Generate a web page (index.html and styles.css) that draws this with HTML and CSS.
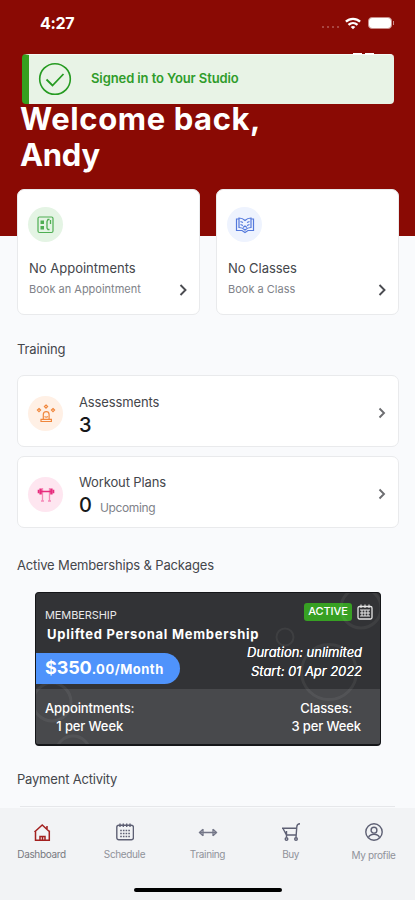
FILE: index.html
```html
<!DOCTYPE html>
<html lang="en">
<head>
<meta charset="utf-8">
<meta name="viewport" content="width=device-width, initial-scale=1">
<title>Dashboard</title>
<link rel="stylesheet" href="styles.css">
</head>
<body>
<div class="app">
  <header class="hero">
    <div class="status">
      <span class="time">4:27</span>
      <div class="status-icons">
        <span class="dots"><i></i><i></i><i></i><i></i></span>
        <svg width="16" height="13" viewBox="0 0 16 13" fill="none" stroke="#fff" stroke-width="2.3"><path d="M.9 4.7C5 .8 11 .8 15.100 4.700M3.500 7.900c2.600-2.400 6.400-2.400 9 0"/><path d="M5.700 10c1.400-1.200 3.200-1.200 4.600 0L8 12.300z" fill="#fff" stroke="none"/></svg>
        <span class="battery"></span><i class="nub"></i>
      </div>
    </div>
    <div class="toast" role="status">
      <svg width="34" height="34" viewBox="0 0 34 34" fill="none" stroke="#269b22" stroke-width="1.600"><circle cx="17" cy="17" r="15.300"/><path d="M8.500 17.500l6 6L25.500 12" stroke-width="1.800"/></svg>
      <span>Signed in to Your Studio</span>
      <b class="peek"></b>
    </div>
    <h1><span class="t-hi">Welcome back,</span><br><span class="t-name">Andy</span></h1>
  </header>

  <main>
    <section class="tiles">
      <a class="tile">
        <span class="disc green"><svg width="18" height="18" viewBox="0 0 18 18" fill="none" stroke="#4eae52"><rect x="1" y="1" width="15" height="15.500" rx="1.500" stroke-width="1.200"/><path d="M3.500 4.500H7V8H3.500zM3.500 10H7v3.500H3.500z" fill="#4eae52" stroke="none"/><path d="M12.500 3.500h-1.500L10 5.500V12l1 1.500h1.500M13.500 4v4" stroke-width="1.300"/></svg></span>
        <span class="tile-title t-app">No Appointments</span>
        <span class="tile-row"><span class="t-bookapp">Book an Appointment</span><svg class="chev" width="8" height="12" viewBox="0 0 8 12"><path d="M1.500 1l5 5-5 5"/></svg></span>
      </a>
      <a class="tile">
        <span class="disc blue"><svg width="20" height="18" viewBox="0 0 20 18" fill="none" stroke="#5479dc" stroke-width="1.200"><path d="M4 3H1.500v11.500H7l3 2 3-2h5.500V3H16M10 4.500C8 2.500 6 2 4 2v9.500c2 0 4 .5 6 2.500 2-2 4-2.500 6-2.500V2c-2 0-4 .5-6 2.500zM5.500 5.500l2.500 1M5.500 8.500l2.500 1M14.500 5.500l-2.500 1M14.500 8.500l-2.500 1M8 11.500l2-1.500 2 1.500"/></svg></span>
        <span class="tile-title t-cls">No Classes</span>
        <span class="tile-row"><span class="t-bookcls">Book a Class</span><svg class="chev" width="8" height="12" viewBox="0 0 8 12"><path d="M1.500 1l5 5-5 5"/></svg></span>
      </a>
    </section>

    <h2 class="h-training">Training</h2>
    <section class="rows">
      <a class="row">
        <span class="disc orange"><svg width="20" height="19" viewBox="0 0 20 19" fill="none" stroke="#f0873c" stroke-width="1.200"><path d="M7.300 15V10.500a2.900 2.900 0 0 1 5.800 0V15M8.500 12.500c1 .8 2.400.8 3.400 0M5 15.300h10.400v2.200H5zM10 1l1.600 1.600L10 4.200 8.400 2.600zM3 4.500l1.600 1.600L3 7.700 1.400 6.100zM17 4.500l1.600 1.600L17 7.700l-1.600-1.600z"/></svg></span>
        <span class="info"><span class="label t-assess">Assessments</span><span class="num">3</span></span>
        <svg class="chev soft" width="8" height="12" viewBox="0 0 8 12"><path d="M1.500 1.500L6 6l-4.500 4.500"/></svg>
      </a>
      <a class="row">
        <span class="disc pink"><svg width="18" height="18" viewBox="0 0 18 18" fill="none" stroke="#e72d7e" stroke-width="1.500"><path d="M5.500 3v13.500M12.500 3v13.500M4 16h3M11 16h3" stroke="#f58ab8" stroke-width="1.300"/><path d="M3 6.500h12"/><path d="M1.600 4.800v3.400M16.400 4.800v3.400" stroke-width="1.800"/><path d="M3.600 3.500v6M14.400 3.500v6" stroke-width="2.400"/></svg></span>
        <span class="info"><span class="label t-work">Workout Plans</span><span class="num">0<small>Upcoming</small></span></span>
        <svg class="chev soft" width="8" height="12" viewBox="0 0 8 12"><path d="M1.500 1.500L6 6l-4.500 4.500"/></svg>
      </a>
    </section>

    <h2 class="h-active">Active Memberships &amp; Packages</h2>
    <article class="pass">
      <svg class="rings" width="346" height="153" viewBox="0 0 346 153" fill="none" stroke="#fff" stroke-opacity=".06" stroke-width="3"><circle cx="294" cy="79" r="27.500"/><circle cx="250" cy="44" r="8.500" stroke-width="2"/><circle cx="326" cy="15" r="20"/><circle cx="17" cy="109" r="19"/><circle cx="38" cy="160" r="17"/></svg>
      <div class="pass-top">
        <div class="pass-head"><span class="kind">MEMBERSHIP</span><span class="badge">ACTIVE</span>
          <svg width="16" height="16" viewBox="0 0 16 16" fill="none" stroke="#e6e6e6" stroke-width="1.300"><rect x="1" y="2.500" width="14" height="12.500" rx="1.500"/><path d="M4 .5v3.500M8 .5v3.500M12 .5v3.500M3 6h10M3 9h10M3 12h10M5 6v6.500M8 6v6.500M11 6v6.500" stroke-width="1.100"/></svg>
        </div>
        <div class="pass-name">Uplifted Personal Membership</div>
        <div class="pass-mid">
          <div class="price"><span class="amt">$350</span><span class="per">.00/Month</span></div>
          <div class="dates"><span class="t-dur">Duration: unlimited</span><span class="t-start">Start: 01 Apr 2022</span></div>
        </div>
      </div>
      <div class="pass-bottom">
        <div><span class="t-a">Appointments:</span><span class="t-1">1 per Week</span></div>
        <div><span class="t-c">Classes:</span><span class="t-3">3 per Week</span></div>
      </div>
    </article>

    <h2 class="h-pay">Payment Activity</h2>
  </main>

  <nav class="tabs">
    <a class="tab on"><svg width="18" height="20" viewBox="0 0 18 20" fill="none" stroke="#a3201f" stroke-width="1.500"><path d="M2.500 8.500v9.700h13.800V8.500M1.500 10L9.200 3l7.600 7M14 4v3.500M7 18v-3.500h5V18M9.500 15v3"/></svg><span class="t-n1">Dashboard</span></a>
    <a class="tab"><svg width="18" height="20" viewBox="0 0 18 20" fill="none" stroke="#5e6074" stroke-width="1.400"><rect x=".8" y="3.300" width="16.600" height="14.500" rx="2"/><path d="M4 1.500V5M7.300 1.500V5M10.700 1.500V5M14 1.500V5"/><path d="M4.200 8.500h10M4.200 11.500h10M4.200 14.500h10" stroke-width="1.600" stroke-dasharray="1.600 1.100"/></svg><span class="t-n2">Schedule</span></a>
    <a class="tab"><svg width="20" height="20" viewBox="0 0 20 20" fill="none" stroke="#5e6074" stroke-width="1.300"><path d="M1 10.500h18M5 7.300l-3.500 3.200L5 13.700M5 7v7M15 7.300l3.500 3.200-3.500 3.200M15 7v7" stroke-opacity=".85"/></svg><span class="t-n3">Training</span></a>
    <a class="tab"><svg width="20" height="20" viewBox="0 0 20 20" fill="none" stroke="#5e6074" stroke-width="1.400"><path d="M19 1.800c-2 0-3 1-3.200 3L15 15.500M1 6.200h14.500M2 6.500L5.500 13h9.500M5.500 9v6"/><circle cx="5.500" cy="17" r="1.300"/><circle cx="15" cy="17" r="1.300"/></svg><span class="t-n4">Buy</span></a>
    <a class="tab last"><svg width="20" height="20" viewBox="0 0 20 20" fill="none" stroke="#5e6074" stroke-width="1.400"><circle cx="10" cy="10" r="8.200"/><circle cx="10" cy="8.200" r="2.900"/><path d="M4.500 15.500c1-2.500 3-3.300 5.500-3.300s4.500.8 5.500 3.300"/></svg><span class="t-n5">My profile</span></a>
    <i class="home-bar"></i>
  </nav>
</div>
</body>
</html>
```
FILE: styles.css
```css
* { box-sizing: border-box; }
body { margin: 0; font-family: Inter, "Liberation Sans", sans-serif; color: #44464b; background: #f9fafc; }
.app { width: 415px; height: 900px; overflow: hidden; display: flex; flex-direction: column; }
h1, h2 { margin: 0; }
svg { flex: none; display: block; }

.hero { height: 236px; flex: none; background: #8a0a04; color: #fff; }
.status { height: 54px; padding: 12px 21px 0 40px; display: flex; justify-content: space-between; align-items: flex-start; }
.time { font-size: 16px; line-height: 22px; font-weight: 700; letter-spacing: -.3px; }
.status-icons { display: flex; align-items: center; height: 22px; }
.dots { display: flex; gap: 3px; margin: 8px 6px 0 0; }
.dots i { width: 2px; height: 2px; border-radius: 1px; background: #b25a56; }
.battery { width: 24px; height: 12px; margin-left: 7px; border-radius: 4px; background: #fff; border: 1px solid #c98d8a; }
.nub { width: 1px; height: 4px; margin-left: 1px; background: #c98d8a; }
.toast { position: relative; height: 50px; margin: 0 21px 0 22px; border-radius: 4px; border-left: 7px solid #36a11f; background: #e8f3e6; border-top: 1px solid #f6faf5; display: flex; align-items: center; padding-left: 9px; }
.toast svg { margin-top: -1px; }
.toast span { margin-left: 19px; font-size: 13px; font-weight: 600; color: #2f9c2a; letter-spacing: -.1px; margin-top: -3px; }
.peek { position: absolute; right: 20px; top: -2px; width: 21px; height: 2px; background: linear-gradient(90deg, #fff 9px, transparent 9px 12px, #fff 12px); }
h1 { margin: -3px 0 0 20px; font-size: 31px; line-height: 36px; font-weight: 700; }
.t-hi { letter-spacing: .6px; }
.t-name { letter-spacing: -.3px; }

main { padding: 0 16px 0 17px; }
.tiles { display: grid; grid-template-columns: 1fr 1fr; gap: 16px; margin-top: -47px; }
.tile { height: 126px; background: #fff; border: 1px solid #e9eaec; border-radius: 7px; padding: 17px 12px 0 11px; display: flex; flex-direction: column; }
.disc { width: 35px; height: 35px; border-radius: 50%; display: grid; place-items: center; flex: none; }
.green { background: #e4f4e4; }
.blue { background: #eef3fe; }
.orange { background: #fff0e5; }
.pink { background: #fee6f0; }
.tile .disc { margin-left: -1px; }
.tile-title { margin-top: 17px; font-size: 13px; line-height: 18px; }
.t-app { letter-spacing: 0; }
.t-cls { letter-spacing: -.05px; }
.tile-row { display: flex; justify-content: space-between; align-items: center; height: 18px; margin-top: 3px; font-size: 11px; color: #808289; }
.t-bookapp { letter-spacing: 0; }
.chev { fill: none; stroke: #4b4c51; stroke-width: 1.900; margin-top: 2px; }
.soft { stroke: #6c6d70; margin: 0; }

h2 { font-size: 13px; line-height: 18px; font-weight: 400; }
.h-training { margin-top: 25px; letter-spacing: -.15px; }
.rows { display: grid; gap: 9px; margin-top: 17px; }
.row { height: 72px; background: #fff; border: 1px solid #e9eaec; border-radius: 7px; display: flex; align-items: center; padding: 4px 12px 0 10px; }
.info { flex: 1; margin: 6px 0 0 16px; display: flex; flex-direction: column; }
.label { font-size: 13px; line-height: 18px; }
.t-assess, .t-work { letter-spacing: -.12px; }
.num { font-size: 20px; line-height: 28px; font-weight: 500; color: #17181a; }
.num small { margin-left: 8px; font-size: 12px; font-weight: 400; color: #808289; letter-spacing: -.35px; }

.h-active { margin-top: 28px; letter-spacing: -.15px; }
.pass { position: relative; width: 346px; height: 154px; margin: 18px 0 0 18px; border-radius: 4px; border: 1px solid #151619; border-bottom-width: 2px; background: #323336; color: #fff; overflow: hidden; }
.rings { position: absolute; left: -1px; top: 0; z-index: 1; }
.pass-top { height: 96px; display: flex; flex-direction: column; }
.pass-head { display: flex; align-items: center; height: 19px; margin-top: 9px; padding: 0 7px 0 9px; }
.kind { flex: 1; font-size: 11px; color: #e8e8e9; padding-top: 7px; letter-spacing: -.1px; }
.badge { background: #37a023; width: 48px; height: 18px; line-height: 17px; border-radius: 3px; font-size: 11px; font-weight: 500; text-align: center; margin-right: 5px; letter-spacing: -.1px; }
.pass-name { margin: 4px 0 0 11px; font-size: 13px; line-height: 18px; font-weight: 700; letter-spacing: .72px; }
.pass-mid { display: flex; justify-content: space-between; padding-right: 18px; }
.price { position: relative; z-index: 2; width: 144px; height: 31px; margin-top: 10px; padding-left: 9px; border-radius: 0 16px 16px 0; background: #4f93fb; font-weight: 700; line-height: 29px; white-space: nowrap; }
.amt { font-size: 18px; letter-spacing: -.1px; }
.per { font-size: 13px; letter-spacing: .5px; }
.dates { display: flex; flex-direction: column; align-items: flex-end; font-size: 13px; line-height: 18.500px; font-style: italic; letter-spacing: -.05px; }
.t-dur, .t-start { text-shadow: 0 0 .5px #fff; }
.pass-bottom { height: 56px; background: #48494c; display: flex; justify-content: space-between; padding: 10px 19px 0 9px; font-size: 13px; line-height: 18px; font-weight: 500; text-align: center; }
.pass-bottom div { display: flex; flex-direction: column; align-items: center; }
.t-a, .t-c, .t-1, .t-3 { letter-spacing: -.12px; }
.h-pay { margin-top: 24px; letter-spacing: -.2px; }

.tabs { position: relative; height: 92px; flex: none; margin-top: auto; background: #f2f3f5; display: grid; grid-template-columns: repeat(5, 83px); align-items: start; padding-top: 14px; }
.tabs::before { content: ""; position: absolute; left: 20px; right: 20px; top: -2px; height: 1px; background: #e6e7ea; }
.tab { display: flex; flex-direction: column; align-items: center; font-size: 10px; color: #90929a; }
.tab span { line-height: 14px; margin-top: 5px; letter-spacing: -.35px; }
.tab .t-n4 { letter-spacing: -.5px; }
.tab.on { color: #77797f; }
.tab.last span { margin-top: 6px; }
.home-bar { position: absolute; left: 134px; bottom: 8px; width: 148px; height: 4px; border-radius: 2px; background: #000; }
```
